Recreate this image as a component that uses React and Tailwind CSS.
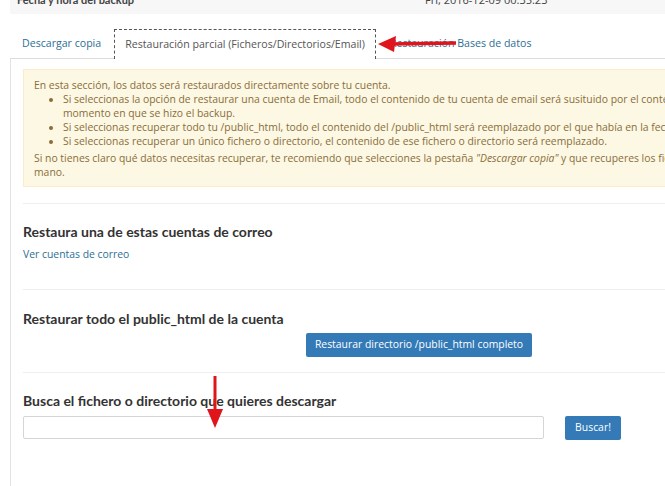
import React from "react";

const body = { fontFamily: '"Open Sans", "Noto Sans", sans-serif' };
const head = { fontFamily: 'Lato, "Open Sans", sans-serif' };

function Divider() {
  return <div className="h-px bg-[#eeeeee] w-full" />;
}

export default function App() {
  return (
    <div className="w-[665px] h-[486px] overflow-hidden bg-white relative" style={body}>
      {/* top strip */}
      <div className="ml-[10px] h-[14px] bg-[#f7f7f7] overflow-hidden relative">
        <div className="flex text-[11px] text-[#444] leading-[14px] -mt-[7px]">
          <span className="ml-[7px] w-[408px] font-bold" style={head}>Fecha y hora del backup</span>
          <span>Fri, 2016-12-09 00:35:23</span>
        </div>
      </div>

      {/* tabs */}
      <div className="mt-[15px] ml-[10px] flex items-end border-b border-[#dddddd] h-[30px] text-[10.6px]">
        <div className="h-[29px] flex items-center pl-[12px] pr-[13px] text-[#2c6f95]">Descargar copia</div>
        <div className="h-[30px] -mb-px flex items-center px-[10px] bg-white border border-dashed border-b-0 border-[#555] text-[#555]">
          Restauración parcial (Ficheros/Directorios/Email)
        </div>
        <div className="h-[29px] flex items-center pl-[14px] text-[#2c6f95]">Restauración Bases de datos</div>
      </div>

      {/* panel */}
      <div className="ml-[10px] border-l border-[#e3e3e3] w-[800px] h-[440px] px-[12px] pt-[10px]">
        <div className="bg-[#fcf8e3] border border-[#faebcc] text-[#8a6d3b] text-[10.4px] leading-[14px] pl-[10px] pt-[8px] pb-[7px] whitespace-nowrap w-[780px]">
          <p>En esta sección, los datos será restaurados directamente sobre tu cuenta.</p>
          <ul className="list-disc pl-[29px] mb-[3px]">
            <li>
              Si seleccionas la opción de restaurar una cuenta de Email, todo el contenido de tu cuenta de email será susituido por el contenido que tenía en el
              <br />
              momento en que se hizo el backup.
            </li>
            <li>Si seleccionas recuperar todo tu /public_html, todo el contenido del /public_html será reemplazado por el que había en la fecha del backup.</li>
            <li>Si seleccionas recuperar un único fichero o directorio, el contenido de ese fichero o directorio será reemplazado.</li>
          </ul>
          <p>
            Si no tienes claro qué datos necesitas recuperar, te recomiendo que selecciones la pestaña <i>"Descargar copia"</i> y que recuperes los ficheros a
            <br />
            mano.
          </p>
        </div>

        <div className="mt-[16px]"><Divider /></div>

        <div className="pt-[19px] pb-[28px]">
          <h3 className="text-[14px] font-bold text-[#333] leading-[18px]" style={head}>Restaura una de estas cuentas de correo</h3>
          <div className="mt-[6px] text-[10.4px] text-[#2c6f95] leading-[14px]">Ver cuentas de correo</div>
        </div>

        <Divider />

        <div className="pt-[20px] pb-[15px]">
          <h3 className="text-[14px] font-bold text-[#333] leading-[18px]" style={head}>Restaurar todo el public_html de la cuenta</h3>
          <div className="ml-[283px] mt-[5px] w-[226px] h-[24px] bg-[#337ab7] rounded-[2px] text-white text-[10.4px] flex items-center justify-center">
            Restaurar directorio /public_html completo
          </div>
        </div>

        <Divider />

        <div className="pt-[19px]">
          <h3 className="text-[14px] font-bold text-[#333] leading-[18px]" style={head}>Busca el fichero o directorio que quieres descargar</h3>
          <div className="flex items-start mt-[6px]">
            <div className="w-[521px] h-[23px] border border-[#d5d5d5] rounded-[2px] bg-white" />
            <div className="ml-[21px] w-[56px] h-[24px] bg-[#337ab7] rounded-[2px] text-white text-[10.4px] flex items-center justify-center">Buscar!</div>
          </div>
        </div>
      </div>

      {/* red arrows */}
      <svg className="absolute left-[376px] top-[35px]" width="84" height="18" viewBox="0 0 84 18">
        <line x1="14" y1="9" x2="80" y2="8" stroke="#e0141b" strokeWidth="3.5" />
        <polygon points="2,9 20,1 18,17" fill="#e0141b" />
      </svg>
      <svg className="absolute left-[206px] top-[374px]" width="18" height="56" viewBox="0 0 18 56">
        <line x1="9" y1="2" x2="9" y2="40" stroke="#e0141b" strokeWidth="3" />
        <polygon points="1,35 17,35 9,54" fill="#e0141b" />
      </svg>
    </div>
  );
}
